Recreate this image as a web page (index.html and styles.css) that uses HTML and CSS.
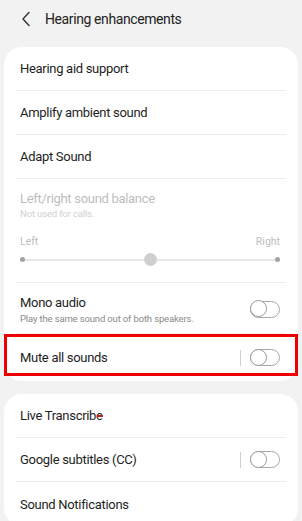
FILE: index.html
```html
<!DOCTYPE html>
<html>
<head>
<meta charset="utf-8">
<link rel="stylesheet" href="styles.css">
</head>
<body>
<div class="screen">
  <header class="topbar">
    <svg class="back" width="10" height="16" viewBox="0 0 10 16"><path d="M8 1.5 L2 8 L8 14.5" fill="none" stroke="#333" stroke-width="1.4" stroke-linecap="round" stroke-linejoin="round"/></svg>
    <span class="title">Hearing enhancements</span>
  </header>

  <section class="card first">
    <div class="row"><span class="label">Hearing aid support</span></div>
    <div class="row"><span class="label">Amplify ambient sound</span></div>
    <div class="row"><span class="label">Adapt Sound</span></div>
    <div class="row balance">
      <div class="label dim">Left/right sound balance</div>
      <div class="sub dim2">Not used for calls.</div>
      <div class="ends"><span>Left</span><span>Right</span></div>
      <div class="slider">
        <span class="dot"></span>
        <span class="track"></span>
        <span class="thumb"></span>
        <span class="track"></span>
        <span class="dot"></span>
      </div>
    </div>
    <div class="row mono">
      <div class="texts">
        <div class="label">Mono audio</div>
        <div class="sub">Play the same sound out of both speakers.</div>
      </div>
      <span class="toggle"></span>
    </div>
    <div class="row mute last">
      <span class="label">Mute all sounds</span>
      <span class="vline"></span>
      <span class="toggle"></span>
      <span class="highlight"></span>
    </div>
  </section>

  <section class="card second">
    <div class="row"><span class="label live">Live Transcribe<span class="mark"></span></span></div>
    <div class="row">
      <span class="label">Google subtitles (CC)</span>
      <span class="vline"></span>
      <span class="toggle"></span>
    </div>
    <div class="row last"><span class="label">Sound Notifications</span></div>
  </section>
</div>
</body>
</html>
```

FILE: styles.css
```css
* { box-sizing: border-box; }
html, body { margin: 0; padding: 0; }
body {
  background: #f2f2f2;
  font-family: Roboto, "Noto Sans", "Liberation Sans", sans-serif;
  color: #1e1e1e;
  width: 302px;
  height: 521px;
  overflow: hidden;
}
.screen { padding: 0 4px; }
.topbar {
  height: 38px;
  display: flex;
  align-items: center;
  padding-left: 17px;
}
.back { margin-right: 14px; }
.title { font-size: 14px; color: #222; letter-spacing: -0.4px; }

.card {
  background: #fff;
  border-radius: 18px;
  margin-top: 9px;
}
.card.second { margin-top: 13px; }
.row {
  margin: 0 12px;
  padding: 0 6px 0 4px;
  min-height: 44px;
  border-bottom: 1px solid #ededed;
  display: flex;
  align-items: center;
}
.row.last { border-bottom: none; }
.label { font-size: 13px; color: #1e1e1e; letter-spacing: -0.3px; }
.dim { color: #bdbdbd; }
.sub { font-size: 9.5px; color: #8a8a8a; margin-top: 2px; letter-spacing: -0.15px; }
.dim2 { color: #d0d0d0; }

.balance {
  display: block;
  height: 104px;
  padding-top: 12px;
}
.ends {
  display: flex;
  justify-content: space-between;
  font-size: 10.5px;
  color: #bdbdbd;
  margin-top: 16px;
}
.slider {
  display: flex;
  align-items: center;
  margin-top: 5px;
  height: 13px;
}
.dot { width: 5px; height: 5px; border-radius: 50%; background: #a3a3a3; flex: none; }
.track { flex: 1; height: 2px; background: #e8e8e8; }
.thumb { width: 13px; height: 13px; border-radius: 50%; background: #cfcfcf; flex: none; }

.mono { height: 51px; justify-content: space-between; padding-top: 2px; }
.mono .sub { margin-top: 3px; }
.mute { height: 47px; position: relative; border-bottom: none; }
.mute .label, .second .label { flex: 1; }

.vline { width: 1px; height: 16px; background: #cfcfcf; margin-right: 9px; }
.toggle {
  position: relative;
  width: 30px;
  height: 17px;
  border: 1.3px solid #a8a8a8;
  border-radius: 9px;
  flex: none;
}
.toggle::before {
  content: "";
  position: absolute;
  left: -1.3px;
  top: -1.3px;
  width: 17px;
  height: 17px;
  border: 1.3px solid #9a9a9a;
  border-radius: 50%;
  box-sizing: border-box;
  background: #fff;
}
.highlight {
  position: absolute;
  left: -12px;
  right: -12px;
  top: 0;
  height: 42px;
  border: 3.5px solid #ee0000;
  pointer-events: none;
}
.live { position: relative; }
.mark {
  position: absolute;
  left: 77px;
  top: 7px;
  width: 6px;
  height: 2px;
  background: #c62020;
}
```
